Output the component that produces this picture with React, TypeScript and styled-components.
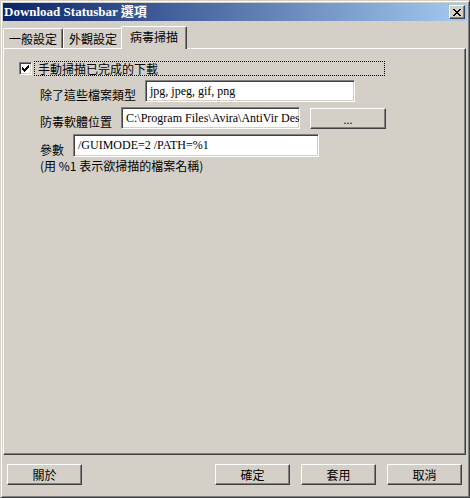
import React from 'react';
import styled, { createGlobalStyle } from 'styled-components';

const CJK = `"Noto Sans CJK TC", "Noto Sans CJK SC", sans-serif`;
const SERIF = `"Liberation Serif", "Noto Sans CJK TC", serif`;

const Global = createGlobalStyle`
  html, body { margin: 0; padding: 0; background: #D4D0C8; }
  body { width: 470px; height: 498px; overflow: hidden; }
  * { box-sizing: border-box; }
`;

const Window = styled.div`
  width: 470px;
  height: 498px;
  background: #d4d0c8;
  border: 1px solid;
  border-color: #d4d0c8 #404040 #404040 #d4d0c8;
  box-shadow: inset 1px 1px #ffffff, inset -1px -1px #808080;
  padding: 2px;
  display: flex;
  flex-direction: column;
  font-family: ${CJK};
  font-size: 12px;
  color: #000;
`;

const TitleBar = styled.div`
  height: 18px;
  flex: none;
  display: flex;
  align-items: center;
  justify-content: space-between;
  padding: 0 2px 0 1px;
  background: linear-gradient(to right, #0a246a, #a6caf0);
`;

const TitleText = styled.span`
  font-family: ${SERIF};
  font-weight: bold;
  font-size: 13px;
  color: #fff;
  line-height: 18px;
  white-space: nowrap;
`;

const raised = `
  border: 1px solid;
  border-color: #ffffff #404040 #404040 #ffffff;
  box-shadow: inset -1px -1px #808080;
  background: #d4d0c8;
`;

const sunken = `
  border: 1px solid;
  border-color: #808080 #ffffff #ffffff #808080;
  box-shadow: inset 1px 1px #404040, inset -1px -1px #d4d0c8;
`;

const CloseButton = styled.div`
  ${raised}
  width: 16px;
  height: 14px;
  display: flex;
  align-items: center;
  justify-content: center;
`;

const Body = styled.div`
  flex: 1;
  display: flex;
  flex-direction: column;
  padding-top: 5px;
`;

const TabStrip = styled.div`
  display: flex;
  align-items: flex-end;
  height: 23px;
  margin-bottom: -1px;
  position: relative;
  z-index: 1;
`;

const Tab = styled.div<{ $active?: boolean }>`
  height: ${(p) => (p.$active ? 23 : 20)}px;
  margin: ${(p) => (p.$active ? '0 -2px 0 -2px' : '0 0 1px 0')};
  padding: 0 ${(p) => (p.$active ? 8 : 5)}px ${(p) => (p.$active ? 2 : 0)}px;
  background: #d4d0c8;
  border-top: 1px solid #fff;
  border-left: 1px solid #fff;
  border-right: 1px solid #404040;
  border-top-left-radius: 2px;
  border-top-right-radius: 2px;
  box-shadow: inset -1px 0 #808080;
  display: flex;
  align-items: center;
  white-space: nowrap;
  line-height: 14px;
  position: relative;
  z-index: ${(p) => (p.$active ? 2 : 1)};
`;

const Panel = styled.div`
  flex: 1;
  margin-right: 1px;
  border: 1px solid;
  border-color: #ffffff #404040 #404040 #ffffff;
  box-shadow: inset -1px -1px #808080;
  padding: 12px 0 0 15px;
  display: flex;
  flex-direction: column;
`;

const CheckRow = styled.div`
  display: flex;
  align-items: center;
  height: 15px;
`;

const CheckBox = styled.div`
  ${sunken}
  width: 13px;
  height: 13px;
  background: #fff;
  display: flex;
  align-items: center;
  justify-content: center;
  flex: none;
`;

const FocusLabel = styled.div`
  margin-left: 2px;
  width: 351px;
  height: 15px;
  border: 1px dotted #000;
  padding-left: 3px;
  line-height: 13px;
  white-space: nowrap;
`;

const Form = styled.div`
  display: flex;
  flex-direction: column;
  gap: 5px;
  margin-top: 4px;
  padding-left: 21px;
`;

const Row = styled.div`
  display: flex;
  align-items: flex-end;
  gap: 9px;
`;

const Label = styled.span`
  line-height: 14px;
  white-space: nowrap;
`;

const Field = styled.div<{ $w: number; $h: number }>`
  ${sunken}
  width: ${(p) => p.$w}px;
  height: ${(p) => p.$h}px;
  background: #fff;
  font-family: ${SERIF};
  font-size: 12px;
  padding: 0 4px;
  display: flex;
  align-items: center;
  overflow: hidden;
  white-space: nowrap;
`;

const BrowseButton = styled.div`
  ${raised}
  width: 76px;
  height: 21px;
  margin-left: 1px;
  display: flex;
  align-items: center;
  justify-content: center;
  padding-top: 3px;
  font-family: ${SERIF};
  font-size: 12px;
`;

const Note = styled.div`
  margin-top: -3px;
  line-height: 13px;
  white-space: nowrap;
`;

const ButtonBar = styled.div`
  flex: none;
  display: flex;
  align-items: center;
  gap: 11px;
  padding: 9px 5px 10px 4px;
`;

const Spacer = styled.div`
  flex: 1;
`;

const DlgButton = styled.div`
  ${raised}
  width: 75px;
  height: 21px;
  display: flex;
  align-items: center;
  justify-content: center;
  line-height: 14px;
`;

export default function App() {
  return (
    <>
      <Global />
      <Window>
        <TitleBar>
          <TitleText>Download Statusbar 選項</TitleText>
          <CloseButton>
            <svg width="8" height="7" viewBox="0 0 8 7" shapeRendering="crispEdges">
              <path
                fill="#000"
                d="M0 0h2v1h1v1h2V1h1V0h2v1H7v1H6v1H5v1h1v1h1v1h1v1H6V6H5V5H3v1H2v1H0V6h1V5h1V4h1V3H2V2H1V1H0z"
              />
            </svg>
          </CloseButton>
        </TitleBar>
        <Body>
          <TabStrip>
            <Tab>一般設定</Tab>
            <Tab>外觀設定</Tab>
            <Tab $active>病毒掃描</Tab>
          </TabStrip>
          <Panel>
            <CheckRow>
              <CheckBox>
                <svg width="7" height="7" viewBox="0 0 7 7" shapeRendering="crispEdges">
                  <path fill="#000" d="M6 0h1v3H6v1H5v1H4v1H3v1H2V6H1V5H0V2h1v1h1v1h1V3h1V2h1V1h1z" />
                </svg>
              </CheckBox>
              <FocusLabel>手動掃描已完成的下載</FocusLabel>
            </CheckRow>
            <Form>
              <Row>
                <Label>除了這些檔案類型</Label>
                <Field $w={210} $h={22}>jpg, jpeg, gif, png</Field>
              </Row>
              <Row>
                <Label>防毒軟體位置</Label>
                <Field $w={179} $h={22}>C:\Program Files\Avira\AntiVir Desk</Field>
                <BrowseButton>...</BrowseButton>
              </Row>
              <Row>
                <Label>參數</Label>
                <Field $w={246} $h={23}>/GUIMODE=2 /PATH=%1</Field>
              </Row>
              <Note>(用 %1 表示欲掃描的檔案名稱)</Note>
            </Form>
          </Panel>
          <ButtonBar>
            <DlgButton>關於</DlgButton>
            <Spacer />
            <DlgButton>確定</DlgButton>
            <DlgButton>套用</DlgButton>
            <DlgButton>取消</DlgButton>
          </ButtonBar>
        </Body>
      </Window>
    </>
  );
}
